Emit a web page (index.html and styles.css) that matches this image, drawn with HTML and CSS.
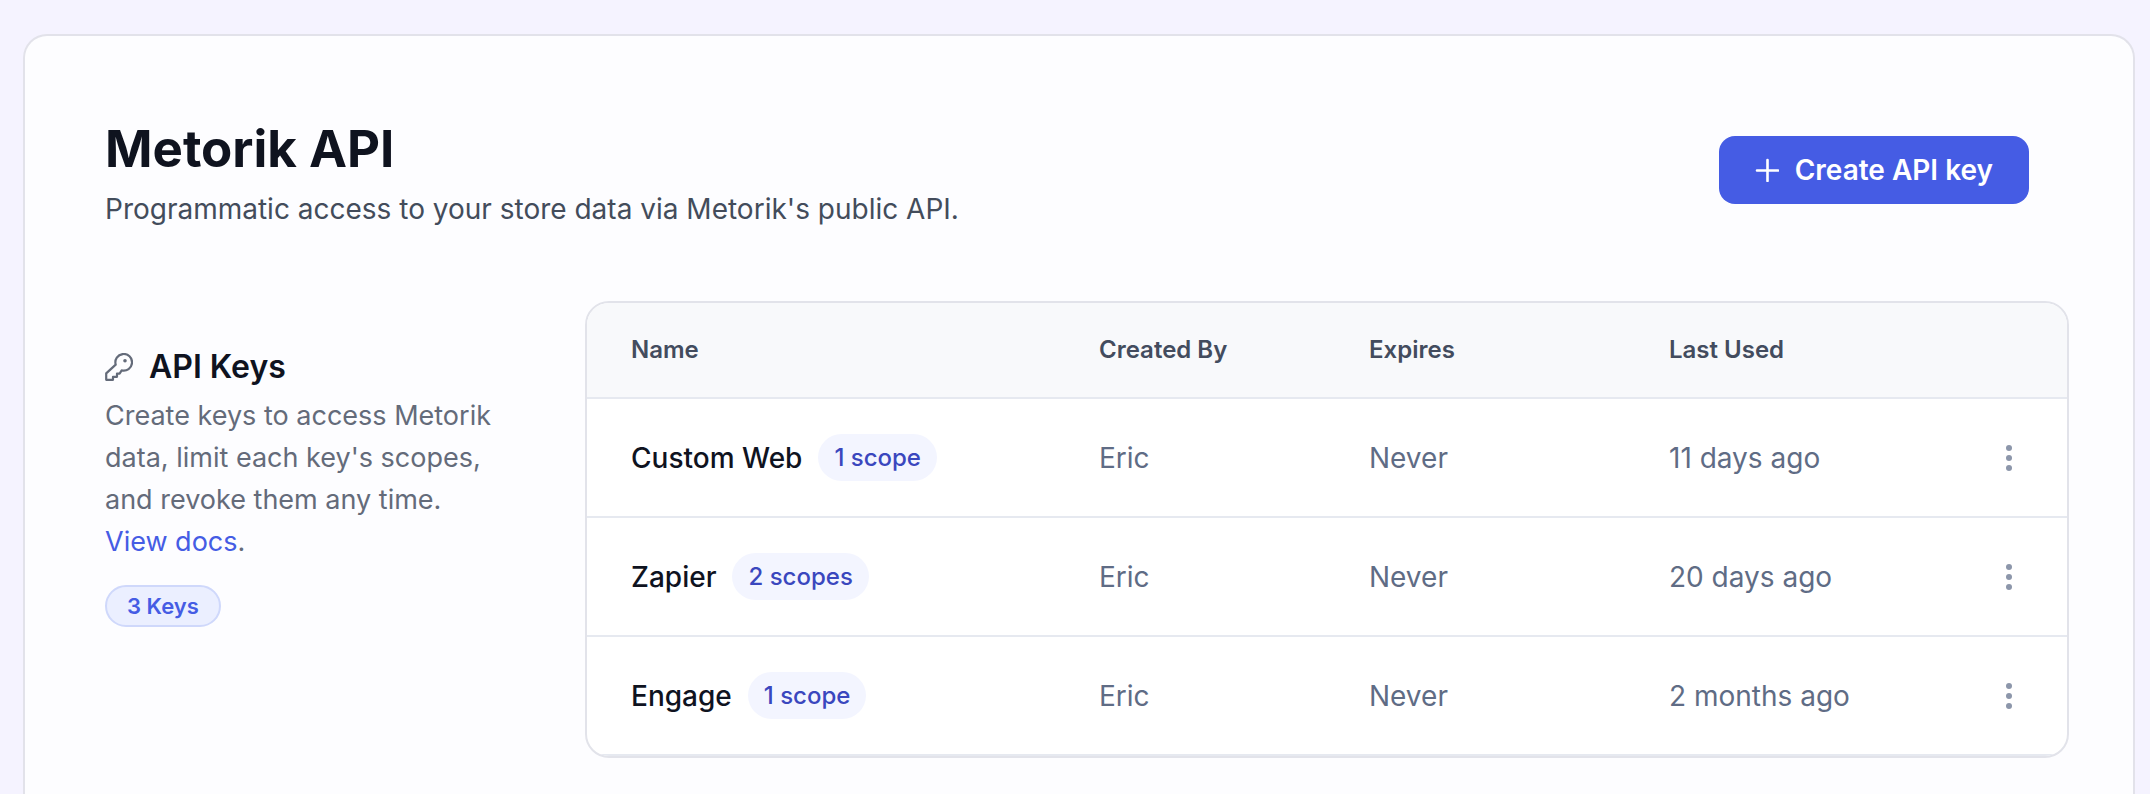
FILE: index.html
```html
<!DOCTYPE html>
<html lang="en">
<head>
  <meta charset="UTF-8" />
  <meta name="viewport" content="width=device-width, initial-scale=1.0" />
  <title>Metorik API</title>
  <link rel="stylesheet" href="styles.css">
</head>
<body>
  <main class="panel">
    <header class="page-header">
      <div>
        <h1 class="page-title">Metorik API</h1>
        <p class="page-subtitle">Programmatic access to your store data via Metorik's public API.</p>
      </div>
      <button type="button" class="btn-primary">
        <svg class="btn-icon" viewBox="0 0 24 24" aria-hidden="true">
          <path d="M12.500 2v21M2 12.500h21" fill="none" stroke="currentColor" stroke-width="2.600" stroke-linecap="round" />
        </svg>
        Create API key
      </button>
    </header>

    <section class="keys">
      <div class="keys-info">
        <h2 class="keys-title">
          <svg class="keys-icon" viewBox="0 0 28 28" aria-hidden="true">
            <path d="M10.700 11.600L1.200 20.400V26.800H8V23.800H12V20.600H14.600L16.700 17.400A8.330 8.330 0 1 0 10.700 11.600z" fill="none" stroke="currentColor" stroke-width="2.200" stroke-linejoin="round" />
            <circle cx="20" cy="7.800" r="1.800" fill="currentColor" />
          </svg>
          API Keys
        </h2>
        <p class="keys-text">Create keys to access Metorik data, limit each key's scopes, and revoke them any time. <a href="#docs">View docs</a>.</p>
        <span class="keys-count">3 Keys</span>
      </div>

      <div class="table-card">
        <table class="keys-table">
          <colgroup>
            <col>
            <col class="col-created">
            <col class="col-expires">
            <col class="col-used">
            <col class="col-menu">
          </colgroup>
          <thead>
            <tr>
              <th>Name</th>
              <th>Created By</th>
              <th>Expires</th>
              <th>Last Used</th>
              <th></th>
            </tr>
          </thead>
          <tbody>
            <tr>
              <td><div class="key-name">Custom Web <span class="scope">1 scope</span></div></td>
              <td>Eric</td>
              <td>Never</td>
              <td>11 days ago</td>
              <td class="menu-cell">
                <button type="button" class="menu-btn" aria-label="Options for Custom Web">
                  <svg viewBox="0 0 6 26" aria-hidden="true"><circle cx="3" cy="3" r="3" /><circle cx="3" cy="13" r="3" /><circle cx="3" cy="23" r="3" /></svg>
                </button>
              </td>
            </tr>
            <tr>
              <td><div class="key-name">Zapier <span class="scope">2 scopes</span></div></td>
              <td>Eric</td>
              <td>Never</td>
              <td>20 days ago</td>
              <td class="menu-cell">
                <button type="button" class="menu-btn" aria-label="Options for Zapier">
                  <svg viewBox="0 0 6 26" aria-hidden="true"><circle cx="3" cy="3" r="3" /><circle cx="3" cy="13" r="3" /><circle cx="3" cy="23" r="3" /></svg>
                </button>
              </td>
            </tr>
            <tr>
              <td><div class="key-name">Engage <span class="scope">1 scope</span></div></td>
              <td>Eric</td>
              <td>Never</td>
              <td>2 months ago</td>
              <td class="menu-cell">
                <button type="button" class="menu-btn" aria-label="Options for Engage">
                  <svg viewBox="0 0 6 26" aria-hidden="true"><circle cx="3" cy="3" r="3" /><circle cx="3" cy="13" r="3" /><circle cx="3" cy="23" r="3" /></svg>
                </button>
              </td>
            </tr>
          </tbody>
        </table>
      </div>
    </section>
  </main>
</body>
</html>
```
FILE: styles.css
```css
* {
  box-sizing: border-box;
}
body {
  display: flex;
  flex-direction: column;
  min-height: 100vh;
  margin: 0;
  padding: 34px 15px 0 23px;
  background: #f5f3ff;
  color: #0f131f;
  font-family: Inter, "Liberation Sans", sans-serif;
  font-size: 28px;
}
h1, h2, p {
  margin: 0;
}
.panel {
  flex: 1;
  padding: 80px 64px 36px 80px;
  background: #fdfdff;
  border: 2px solid #e2e2ea;
  border-bottom: none;
  border-radius: 24px 24px 0 0;
}

/* header */
.page-header {
  display: flex;
  align-items: center;
  justify-content: space-between;
  gap: 40px;
  padding-right: 40px;
  margin-bottom: 77px;
}
.page-title {
  margin-bottom: 12px;
  font-size: 51px;
  font-weight: 700;
  line-height: 66px;
}
.page-subtitle {
  color: #434c5b;
  line-height: 30px;
}
.btn-primary {
  display: flex;
  align-items: center;
  gap: 16px;
  height: 68px;
  padding: 0 36px;
  border: none;
  border-radius: 16px;
  background: #455ce4;
  color: #fff;
  font-family: inherit;
  font-size: 28px;
  font-weight: 600;
  white-space: nowrap;
  cursor: pointer;
}
.btn-icon {
  width: 24px;
  height: 24px;
}

/* api keys */
.keys {
  display: flex;
  align-items: flex-start;
  gap: 80px;
}
.keys-info {
  flex: none;
  width: 400px;
  padding-top: 46px;
}
.keys-title {
  display: flex;
  align-items: center;
  gap: 16px;
  margin-bottom: 8px;
  font-size: 32px;
  font-weight: 600;
  line-height: 40px;
}
.keys-icon {
  width: 28px;
  height: 28px;
  color: #646b7a;
}
.keys-text {
  margin-bottom: 22px;
  color: #646b7a;
  font-size: 27px;
  line-height: 42px;
}
.keys-text a {
  color: #455ce4;
  text-decoration: none;
}
.keys-count {
  display: inline-block;
  padding: 0 20px;
  border: 2px solid #cfd8fb;
  border-radius: 22px;
  background: #ebefff;
  color: #455ce4;
  font-size: 22px;
  font-weight: 600;
  line-height: 38px;
}

/* table */
.table-card {
  flex: 1;
  min-width: 0;
  overflow: hidden;
  background: #fff;
  border: 2px solid #e2e3ea;
  border-radius: 24px;
}
.keys-table {
  width: 100%;
  table-layout: fixed;
  border-collapse: separate;
  border-spacing: 0;
}
.col-created {
  width: 270px;
}
.col-expires {
  width: 300px;
}
.col-used {
  width: 320px;
}
.col-menu {
  width: 122px;
}
.keys-table th,
.keys-table td {
  padding: 0 0 0 44px;
  border-bottom: 2px solid #e6e9f0;
  text-align: left;
}
.keys-table th {
  height: 96px;
  padding-bottom: 2px;
  background: #f8f9fb;
  color: #434c5e;
  font-size: 24px;
  font-weight: 600;
}
.keys-table td {
  height: 119px;
  color: #5f6c85;
}
.key-name {
  display: flex;
  align-items: center;
  gap: 16px;
  color: #0f131f;
  font-weight: 500;
}
.scope {
  padding: 0 16px;
  border-radius: 24px;
  background: #f3f5ff;
  color: #3a47be;
  font-size: 24px;
  line-height: 47px;
}
.keys-table .menu-cell {
  padding: 0 44px 0 0;
}
.menu-btn {
  display: flex;
  align-items: center;
  justify-content: center;
  width: 28px;
  height: 40px;
  margin-left: auto;
  padding: 0;
  border: none;
  background: none;
  cursor: pointer;
}
.menu-btn svg {
  width: 6px;
  height: 26px;
  fill: #8c96aa;
}
```
